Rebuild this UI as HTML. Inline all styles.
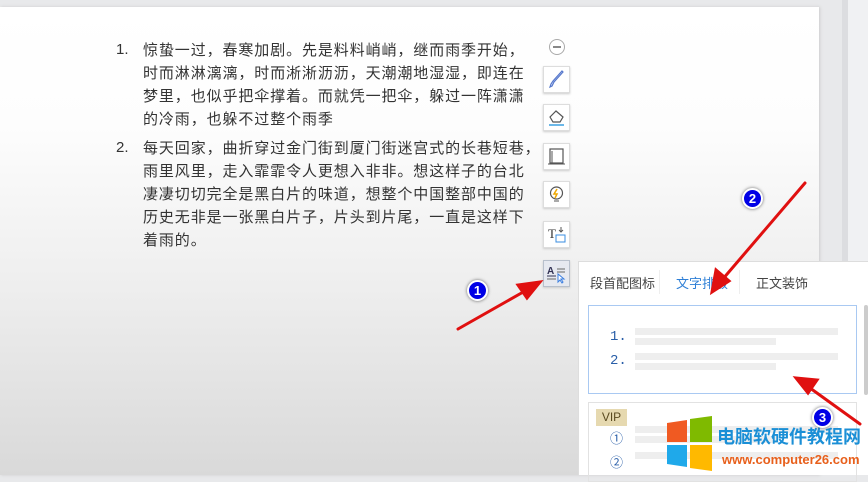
<!DOCTYPE html>
<html><head><meta charset="utf-8"><style>
*{margin:0;padding:0;box-sizing:border-box}
body{width:868px;height:475px;overflow:hidden;position:relative;font-family:"Liberation Sans","Noto Sans CJK SC",sans-serif;background:#e8e9eb}
.page{position:absolute;left:0;top:7px;width:819px;height:468px;background:linear-gradient(#fff 0,#fdfdfd 120px,#eeeeee 280px,#d9d9d9 468px);box-shadow:1px 0 3px #ccc}
.rs{position:absolute;left:842px;top:0;width:6px;height:475px;background:#dcdde0}
.rs2{position:absolute;left:848px;top:0;width:20px;height:475px;background:#f0f1f3}
.t{position:absolute;font-size:15px;color:#333;white-space:nowrap;letter-spacing:0.9px;line-height:20px}
.n{position:absolute;font-size:15px;color:#333}
.tb{position:absolute;left:543px;width:27px;height:27px;background:#fff;border:1px solid #ddd;box-shadow:0 1px 2px #ccc}
.panel{position:absolute;left:578px;top:261px;width:290px;height:214px;background:#fff;border-left:1px solid #ddd;border-top:1px solid #ddd}
.tab{position:absolute;top:273px;font-size:13px;color:#444}
.bar{position:absolute;height:7px;background:#eeeeee}
.c{position:absolute;width:21px;height:21px;border-radius:50%;background:#0000e6;border:2px solid #fff;box-shadow:0 0 3px #666;color:#fff;font-size:13px;font-weight:bold;text-align:center;line-height:17px}
</style></head><body>
<div class="page"></div>
<div class="rs"></div><div class="rs2"></div>

<div class="n" style="left:116px;top:41px">1.</div>
<div class="t" style="left:143px;top:41px">惊蛰一过，春寒加剧。先是料料峭峭，继而雨季开始，</div>
<div class="t" style="left:143px;top:64px">时而淋淋漓漓，时而淅淅沥沥，天潮潮地湿湿，即连在</div>
<div class="t" style="left:143px;top:87px">梦里，也似乎把伞撑着。而就凭一把伞，躲过一阵潇潇</div>
<div class="t" style="left:143px;top:110px">的冷雨，也躲不过整个雨季</div>
<div class="n" style="left:116px;top:139px">2.</div>
<div class="t" style="left:143px;top:139px">每天回家，曲折穿过金门街到厦门街迷宫式的长巷短巷，</div>
<div class="t" style="left:143px;top:162px">雨里风里，走入霏霏令人更想入非非。想这样子的台北</div>
<div class="t" style="left:143px;top:185px">凄凄切切完全是黑白片的味道，想整个中国整部中国的</div>
<div class="t" style="left:143px;top:208px">历史无非是一张黑白片子，片头到片尾，一直是这样下</div>
<div class="t" style="left:143px;top:231px">着雨的。</div>

<svg style="position:absolute;left:548px;top:38px" width="18" height="18"><circle cx="9" cy="9" r="7.5" fill="#fff" stroke="#aaa"/><line x1="5" y1="9" x2="13" y2="9" stroke="#888" stroke-width="2"/></svg>
<div class="tb" style="top:66px"><svg width="25" height="25"><path d="M19 5 L10 15 L8 19 L6 20 L7 17 L9 14 L18 4 Z" fill="none" stroke="#5577cc" stroke-width="1.2"/></svg></div>
<div class="tb" style="top:104px"><svg width="25" height="25"><path d="M6 12 L12 6 L19 12 L16 17 L9 17 Z" fill="none" stroke="#555" stroke-width="1.2"/><line x1="5" y1="20" x2="20" y2="20" stroke="#3aa0e0" stroke-width="1.5"/></svg></div>
<div class="tb" style="top:143px"><svg width="25" height="25"><rect x="6" y="5" width="13" height="14" fill="none" stroke="#555" stroke-width="1.2"/><line x1="8" y1="7" x2="8" y2="19" stroke="#555"/><line x1="4" y1="20" x2="21" y2="20" stroke="#555"/></svg></div>
<div class="tb" style="top:181px"><svg width="25" height="25"><circle cx="12.5" cy="11" r="6" fill="none" stroke="#555" stroke-width="1.2"/><path d="M13 7 L10 12 L13 12 L11 16" fill="none" stroke="#f0a800" stroke-width="1.5"/><line x1="10" y1="19" x2="15" y2="19" stroke="#555"/></svg></div>
<div class="tb" style="top:221px"><svg width="25" height="25"><text x="4" y="16" font-size="13" font-family="Liberation Serif" fill="#333">T</text><rect x="12" y="13" width="9" height="7" fill="none" stroke="#3a8ee0"/><path d="M17 5 V10 M15 8 L17 10 L19 8" fill="none" stroke="#555"/></svg></div>
<div class="tb" style="top:260px;background:#e6e9f0;border-color:#b8c0cc"><svg width="25" height="25"><text x="3" y="13" font-size="10" font-weight="bold" font-family="Liberation Sans" fill="#335">A</text><line x1="3" y1="15" x2="12" y2="15" stroke="#335"/><line x1="13" y1="8" x2="21" y2="8" stroke="#666"/><line x1="13" y1="11" x2="21" y2="11" stroke="#666"/><line x1="3" y1="18" x2="12" y2="18" stroke="#666"/><path d="M14 13 L14 21 L16 19 L18 22 L19 21 L17 18 L20 18 Z" fill="#fff" stroke="#3a7ee0"/></svg></div>

<div class="panel"></div>
<div class="tab" style="left:590px">段首配图标</div>
<div class="tab" style="left:676px;color:#2e7fd6">文字排版</div>
<div class="tab" style="left:756px">正文装饰</div>
<div style="position:absolute;left:659px;top:270px;width:1px;height:24px;background:#eee"></div>
<div style="position:absolute;left:739px;top:270px;width:1px;height:24px;background:#eee"></div>
<div style="position:absolute;left:588px;top:305px;width:269px;height:89px;border:1px solid #a9c9f2"></div>
<div class="n" style="left:610px;top:329px;font-size:14px;color:#2a5fa8;font-family:'Liberation Mono',monospace">1.</div>
<div class="n" style="left:610px;top:353px;font-size:14px;color:#2a5fa8;font-family:'Liberation Mono',monospace">2.</div>
<div class="bar" style="left:635px;top:328px;width:203px"></div>
<div class="bar" style="left:635px;top:338px;width:141px"></div>
<div class="bar" style="left:635px;top:353px;width:203px"></div>
<div class="bar" style="left:635px;top:363px;width:141px"></div>
<div style="position:absolute;left:588px;top:402px;width:269px;height:80px;border:1px solid #e2e2e2"></div>
<div style="position:absolute;left:596px;top:409px;width:31px;height:17px;background:#e6d9b0;color:#5a4a20;font-size:12px;text-align:center;line-height:17px">VIP</div>
<div class="n" style="left:610px;top:428px;font-size:13px;color:#2a5fa8">①</div>
<div class="n" style="left:610px;top:452px;font-size:13px;color:#2a5fa8">②</div>
<div class="bar" style="left:635px;top:426px;width:203px"></div>
<div class="bar" style="left:635px;top:436px;width:141px"></div>
<div class="bar" style="left:635px;top:452px;width:203px"></div>
<div style="position:absolute;left:864px;top:305px;width:4px;height:90px;background:#ccc;border-radius:2px"></div>

<svg style="position:absolute;left:665px;top:415px" width="50" height="58"><path d="M2 8 L22 5 L22 27 L2 27Z" fill="#f05a22"/><path d="M25 4 L47 1 L47 27 L25 27Z" fill="#7fba00"/><path d="M2 30 L22 30 L22 52 L2 49Z" fill="#1fa9ea"/><path d="M25 30 L47 30 L47 56 L25 53Z" fill="#ffb900"/></svg>
<div style="position:absolute;left:717px;top:423px;font-size:18px;font-weight:bold;color:#1b8fd6;white-space:nowrap">电脑软硬件教程网</div>
<div style="position:absolute;left:722px;top:452px;font-size:13px;font-weight:bold;color:#e8601c;white-space:nowrap">www.computer26.com</div>

<svg style="position:absolute;left:0;top:0" width="868" height="475">
<g stroke="#e01010" stroke-width="3" fill="#e01010" stroke-linecap="round">
<line x1="458" y1="329" x2="525" y2="291"/><path d="M540 282 L518 285 L527 298 Z"/>
<line x1="805" y1="183" x2="722" y2="280"/><path d="M712 292 L716 270 L729 281 Z"/>
<line x1="860" y1="424" x2="810" y2="388"/><path d="M796 378 L817 380 L808 393 Z"/>
</g></svg>
<div class="c" style="left:467px;top:280px">1</div>
<div class="c" style="left:742px;top:188px">2</div>
<div class="c" style="left:812px;top:407px">3</div>
</body></html>
